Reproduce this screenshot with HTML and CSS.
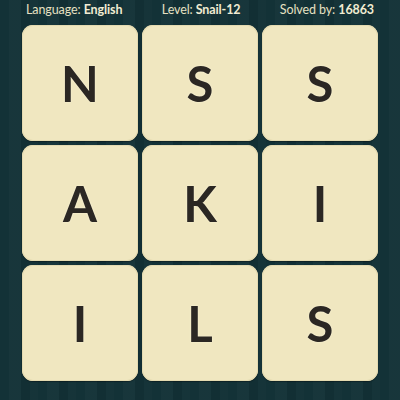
FILE: index.html
```html
<!DOCTYPE html>
<html>
<head>
<meta charset="utf-8">
<link rel="stylesheet" href="styles.css">
</head>
<body>
<div class="page">
  <div class="header">
    <span class="info">Language: <b>English</b></span>
    <span class="info">Level: <b>Snail-12</b></span>
    <span class="info">Solved by: <b>16863</b></span>
  </div>
  <div class="grid">
    <div class="tile">N</div>
    <div class="tile">S</div>
    <div class="tile">S</div>
    <div class="tile">A</div>
    <div class="tile">K</div>
    <div class="tile">I</div>
    <div class="tile">I</div>
    <div class="tile">L</div>
    <div class="tile">S</div>
  </div>
</div>
</body>
</html>
```

FILE: styles.css
```css
html, body {
  margin: 0;
  padding: 0;
}
body {
  width: 400px;
  height: 400px;
  overflow: hidden;
  background-color: #12303a;
  background-color: #133237;
  background-image: repeating-linear-gradient(90deg,
    rgba(255,255,255,0.00) 0px, rgba(255,255,255,0.00) 9px,
    rgba(255,255,255,0.02) 9px, rgba(255,255,255,0.02) 21px,
    rgba(0,0,0,0.06) 21px, rgba(0,0,0,0.06) 30px,
    rgba(255,255,255,0.012) 30px, rgba(255,255,255,0.012) 38px);
  font-family: Lato, "Liberation Sans", sans-serif;
}
.page {
  width: 400px;
  height: 400px;
}
.header {
  height: 20px;
  line-height: 20px;
  padding: 0 26px;
  display: flex;
  justify-content: space-between;
  color: #e6e0c2;
  font-size: 12.5px;
  letter-spacing: -0.1px;
}
.info b {
  font-weight: 700;
  color: #f1ecd2;
}
.grid {
  margin-top: 5px;
  padding-left: 22px;
  display: grid;
  grid-template-columns: repeat(3, 116px);
  grid-auto-rows: 116px;
  gap: 4px;
}
.tile {
  background: #f0e7c0;
  border-radius: 11px;
  box-shadow: inset 0 0 0 1px #e4dab0, 0 1px 1px rgba(0,0,0,0.35);
  display: flex;
  align-items: center;
  justify-content: center;
  font-size: 49px;
  font-weight: 700;
  color: #2b2723;
  text-shadow: 0 0 2px #fbf5da;
}
```
